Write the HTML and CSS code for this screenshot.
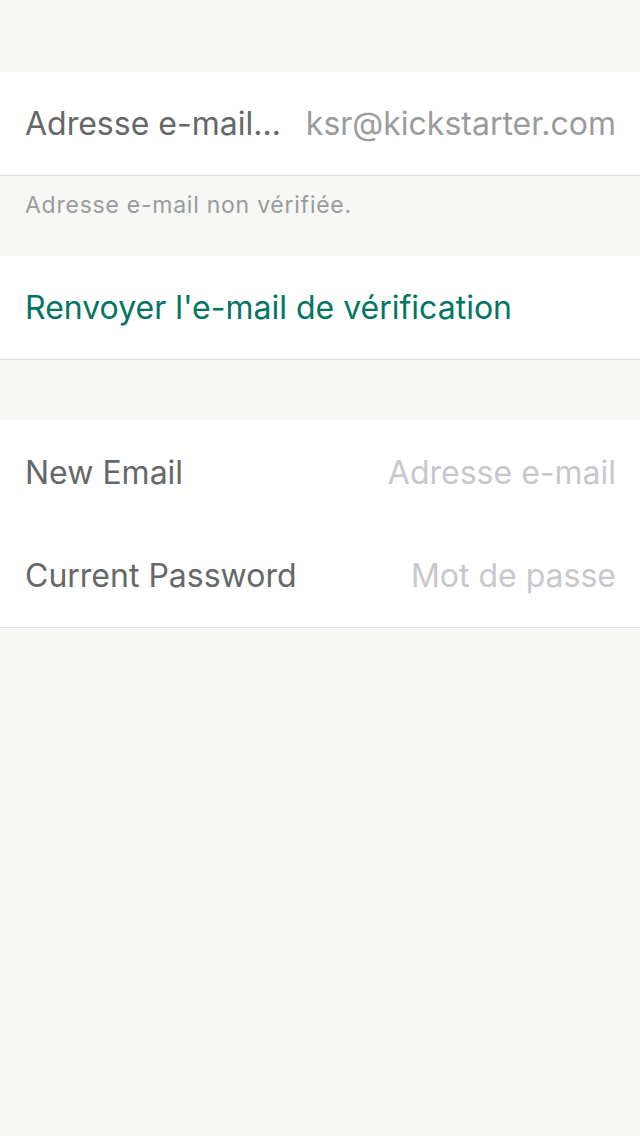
FILE: index.html
```html
<!DOCTYPE html>
<html lang="fr">
<head>
<meta charset="utf-8">
<link rel="stylesheet" href="styles.css">
</head>
<body>
<div class="screen">
  <div class="section">
    <div class="row">
      <span class="label">Adresse e-mail…</span>
      <span class="value">ksr@kickstarter.com</span>
    </div>
  </div>
  <div class="note">Adresse e-mail non vérifiée.</div>
  <div class="section">
    <div class="row">
      <span class="action">Renvoyer l'e-mail de vérification</span>
    </div>
  </div>
  <div class="section spaced">
    <div class="row">
      <span class="label">New Email</span>
      <span class="placeholder">Adresse e-mail</span>
    </div>
    <div class="row">
      <span class="label">Current Password</span>
      <span class="placeholder">Mot de passe</span>
    </div>
  </div>
</div>
</body>
</html>
```
FILE: styles.css
```css
html, body {
  margin: 0;
  padding: 0;
  background: #f7f7f6;
}
.screen {
  width: 640px;
  height: 1136px;
  box-sizing: border-box;
  padding-top: 72px;
  background: #f7f7f6;
  font-family: "Inter", "Roboto", sans-serif;
  overflow: hidden;
}
.section {
  background: #ffffff;
  border-bottom: 1px solid #dcdcdc;
}
.section.spaced {
  margin-top: 60px;
}
.row {
  height: 103px;
  display: flex;
  align-items: center;
  justify-content: space-between;
  padding: 0 24px 0 25px;
}
.spaced .row:first-child {
  height: 104px;
}
.label {
  font-size: 32px;
  color: #656868;
}
.value {
  font-size: 32px;
  color: #9a9c9c;
}
.placeholder {
  font-size: 32px;
  color: #c8c8cc;
}
.action {
  font-size: 32px;
  color: #037563;
}
.note {
  height: 80px;
  padding: 15px 25px 0;
  box-sizing: border-box;
  font-size: 23px;
  letter-spacing: 0.75px;
  color: #9a9c9c;
}
```
